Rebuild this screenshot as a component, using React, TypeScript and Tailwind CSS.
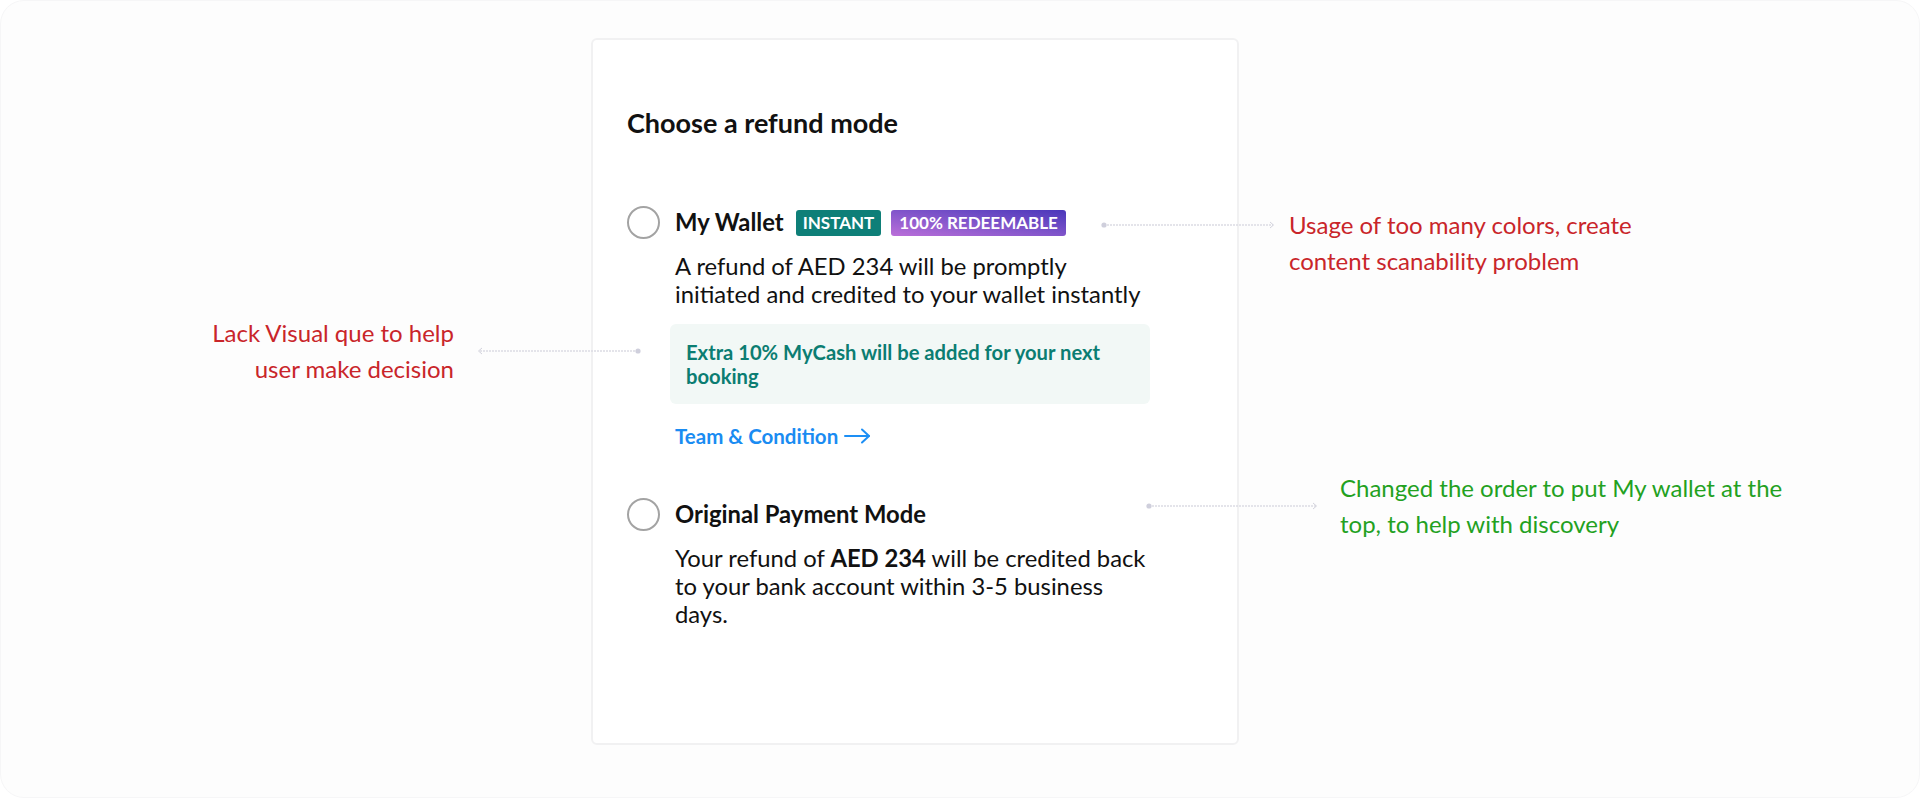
const font = { fontFamily: "Lato, 'Open Sans', sans-serif" };

type Callout = {
  lines: string[];
  color: string;
  align: "left" | "right";
};

const Connector = ({ width, arrow }: { width: number; arrow: "left" | "right" }) => (
  <svg width={width} height={10} viewBox={`0 0 ${width} 10`} className="block shrink-0">
    <line
      x1={3}
      y1={5}
      x2={width - 2}
      y2={5}
      stroke="#dcdce4"
      strokeWidth={1.3}
      strokeDasharray="2 1"
    />
    {arrow === "right" ? (
      <>
        <circle cx={3} cy={5} r={2.6} fill="#cfcfdc" />
        <path d={`M${width - 5} 2 L${width - 1.5} 5 L${width - 5} 8`} fill="none" stroke="#d2d2dc" strokeWidth={1} />
      </>
    ) : (
      <>
        <circle cx={width - 3} cy={5} r={2.6} fill="#cfcfdc" />
        <path d="M5 2 L1.5 5 L5 8" fill="none" stroke="#d2d2dc" strokeWidth={1} />
      </>
    )}
  </svg>
);

const Note = ({ lines, color, align }: Callout) => (
  <p
    className={`text-[24px] leading-[36px] ${align === "right" ? "text-right" : "text-left"}`}
    style={{ color }}
  >
    {lines.map((l) => (
      <span key={l} className="block whitespace-nowrap">
        {l}
      </span>
    ))}
  </p>
);

const Radio = () => (
  <span className="w-[33px] h-[33px] rounded-full border-[2.5px] border-[#a3a3a3] shrink-0" />
);

const LongArrow = () => (
  <svg width={28} height={16} viewBox="0 0 28 16" fill="none" stroke="#1d8ff5" strokeWidth={2} strokeLinecap="round" strokeLinejoin="round">
    <line x1={2} y1={8} x2={26} y2={8} />
    <path d="M19 1.5 L26 8 L19 14.5" />
  </svg>
);

export default function App() {
  return (
    <div className="w-[1920px] h-[798px] bg-white" style={font}>
      <div className="relative w-full h-full rounded-[24px] border border-[#f6f6f7] bg-[#fdfdfd] overflow-hidden">
        {/* Card */}
        <div className="absolute left-[590px] top-[37px] w-[648px] h-[707px] rounded-[6px] border-2 border-[#f1f1f2] bg-white pl-[34px] pt-[67px]">
          <h2 className="text-[27px] leading-[32px] font-bold text-[#111]">Choose a refund mode</h2>

          {/* My Wallet */}
          <div className="mt-[67px] flex items-center h-[33px]">
            <Radio />
            <span className="ml-[15px] text-[23.8px] font-bold text-[#111]">My Wallet</span>
            <span className="ml-[12px] h-[26px] px-[7px] flex items-center rounded-[3px] bg-[#0e7f78] text-white text-[17px] font-bold">
              INSTANT
            </span>
            <span className="ml-[10px] h-[26px] px-[8px] flex items-center rounded-[3px] bg-gradient-to-tr from-[#bb6ed9] to-[#4a36ba] text-white text-[17px] font-bold">
              100% REDEEMABLE
            </span>
          </div>
          <div className="ml-[48px]">
            <p className="mt-[13px] text-[23.8px] leading-[28px] text-[#111]">
              A refund of AED 234 will be promptly
              <br />
              initiated and credited to your wallet instantly
            </p>
            <div className="-ml-[5px] mt-[16px] w-[480px] rounded-[6px] bg-[#f2f8f6] px-4 py-[16px]">
              <p className="text-[20.2px] leading-[24px] font-bold text-[#0b7d72]">
                Extra 10% MyCash will be added for your next
                <br />
                booking
              </p>
            </div>
            <a className="mt-[20px] flex items-center gap-[5px] text-[20.5px] leading-[24px] font-bold text-[#1a8cf2]">
              Team &amp; Condition
              <LongArrow />
            </a>
          </div>

          {/* Original Payment Mode */}
          <div className="mt-[50px] flex items-center h-[33px]">
            <Radio />
            <span className="ml-[15px] text-[23.8px] font-bold text-[#111]">Original Payment Mode</span>
          </div>
          <p className="ml-[48px] mt-[13px] text-[23.8px] leading-[28px] text-[#111]">
            Your refund of <b className="font-bold">AED 234</b> will be credited back
            <br />
            to your bank account within 3-5 business
            <br />
            days.
          </p>
        </div>

        {/* Left callout */}
        <div className="absolute right-[1278px] top-[314px] flex items-center gap-[23px]">
          <Note
            color="#c9252a"
            align="right"
            lines={["Lack Visual que to help", "user make decision"]}
          />
          <Connector width={164} arrow="left" />
        </div>

        {/* Right callout, red */}
        <div className="absolute left-[1100px] top-[206px] flex items-start gap-[14px]">
          <div className="pt-[13px]">
            <Connector width={174} arrow="right" />
          </div>
          <Note
            color="#c9252a"
            align="left"
            lines={["Usage of too many colors, create", "content scanability problem"]}
          />
        </div>

        {/* Right callout, green */}
        <div className="absolute left-[1145px] top-[469px] flex items-center gap-[22px]">
          <Connector width={172} arrow="right" />
          <Note
            color="#23a11f"
            align="left"
            lines={["Changed the order to put My wallet at the", "top, to help with discovery"]}
          />
        </div>
      </div>
    </div>
  );
}
